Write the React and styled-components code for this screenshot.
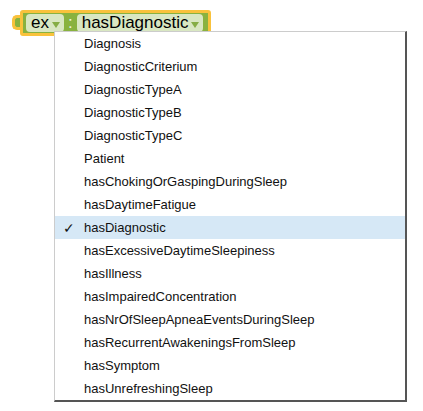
import React from 'react';
import styled, { createGlobalStyle } from 'styled-components';

const GlobalStyle = createGlobalStyle`
  html, body {
    margin: 0;
    padding: 0;
    background: #fff;
    font-family: "Liberation Sans", Arial, sans-serif;
  }
`;

const Page = styled.div`
  position: relative;
  width: 423px;
  height: 411px;
  overflow: hidden;
`;

const BlockRow = styled.div`
  display: flex;
  align-items: flex-start;
  padding: 10px 0 0 12px;
`;

const Tab = styled.div`
  width: 5px;
  height: 9px;
  margin-top: 5px;
  background: #89b23f;
  border: 3px solid #f9c23c;
  border-right: none;
  border-radius: 5px 0 0 5px;
`;

const Block = styled.div`
  display: flex;
  align-items: center;
  gap: 4px;
  height: 20px;
  padding: 0 5px 0 3px;
  background: #89b23f;
  border: 3px solid #f9c23c;
  border-radius: 3px;
`;

const Field = styled.div`
  display: flex;
  align-items: center;
  gap: 2px;
  height: 18px;
  padding: 0 3px 0 5px;
  background: #d9e7c2;
  border-radius: 4px;
  font-size: 17px;
  color: #000;
  line-height: 18px;
`;

const Colon = styled.span`
  font-size: 17px;
  color: #e8f0dc;
`;

const Menu = styled.ul`
  position: absolute;
  left: 54px;
  top: 31px;
  width: 350px;
  margin: 0;
  padding: 0;
  list-style: none;
  background: #fff;
  border: 1px solid #ccc;
  border-right: 2px solid #555;
  border-bottom: 2px solid #555;
`;

const Item = styled.li`
  display: flex;
  align-items: center;
  height: 23px;
  padding-left: 29px;
  position: relative;
  font-size: 13px;
  color: #111;
  background: ${p => (p.selected ? '#d6e8f6' : 'transparent')};
`;

const Check = styled.span`
  position: absolute;
  left: 8px;
  font-size: 14px;
`;

const Arrow = () => (
  <svg width="10" height="8" viewBox="0 0 10 8" style={{ marginTop: 3 }}>
    <path d="M1 1 L9 1 L5 7 Z" fill="#86ad45" />
  </svg>
);

const items = [
  'Diagnosis',
  'DiagnosticCriterium',
  'DiagnosticTypeA',
  'DiagnosticTypeB',
  'DiagnosticTypeC',
  'Patient',
  'hasChokingOrGaspingDuringSleep',
  'hasDaytimeFatigue',
  'hasDiagnostic',
  'hasExcessiveDaytimeSleepiness',
  'hasIllness',
  'hasImpairedConcentration',
  'hasNrOfSleepApneaEventsDuringSleep',
  'hasRecurrentAwakeningsFromSleep',
  'hasSymptom',
  'hasUnrefreshingSleep',
];

const App = () => {
  const selected = 'hasDiagnostic';
  return (
    <Page>
      <GlobalStyle />
      <BlockRow>
        <Tab />
        <Block>
          <Field>ex<Arrow /></Field>
          <Colon>:</Colon>
          <Field>hasDiagnostic<Arrow /></Field>
        </Block>
      </BlockRow>
      <Menu>
        {items.map(name => (
          <Item key={name} selected={name === selected}>
            {name === selected && <Check>✓</Check>}
            {name}
          </Item>
        ))}
      </Menu>
    </Page>
  );
};

export default App;
